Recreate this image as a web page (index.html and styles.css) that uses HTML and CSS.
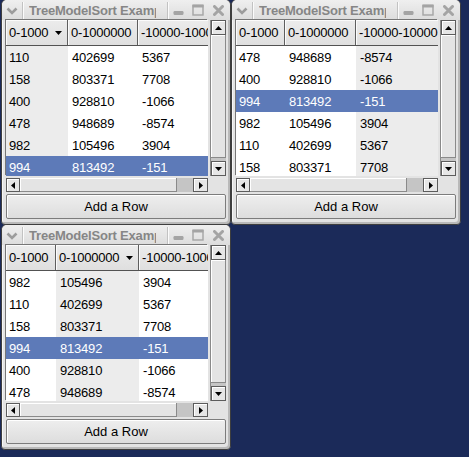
FILE: index.html
```html
<!DOCTYPE html>
<html>
<head>
<meta charset="utf-8">
<link rel="stylesheet" href="styles.css">
</head>
<body>

<div class="win w1">
  <div class="titlebar">
    <span class="menu"><svg width="12" height="8" viewBox="0 0 12 8"><polyline points="1.5,1.5 6,6 10.5,1.5" fill="none" stroke="#9c9c9c" stroke-width="2.6"/></svg></span>
    <span class="tsep"></span>
    <span class="title"><span class="ttext">TreeModelSort Example</span></span>
    <span class="tsep"></span>
    <span class="tbtn"><svg width="11" height="12" viewBox="0 0 11 12"><rect x="0.5" y="7" width="10" height="4" rx="1.2" fill="#a4a4a4"/></svg></span>
    <span class="tbtn"><svg width="12" height="12" viewBox="0 0 12 12"><rect x="1" y="1.5" width="10" height="9.5" fill="none" stroke="#a4a4a4" stroke-width="1.4"/><rect x="0.5" y="0.5" width="11" height="3" fill="#a4a4a4"/></svg></span>
    <span class="tbtn"><svg width="11" height="11" viewBox="0 0 11 11"><path d="M1.5 1.5 L9.5 9.5 M9.5 1.5 L1.5 9.5" stroke="#a4a4a4" stroke-width="3" stroke-linecap="round"/></svg></span>
  </div>
  <div class="body">
    <div class="scrolled">
      <div class="tree">
        <div class="hdr">
          <div class="hc"><span>0-1000</span><svg class="sort" width="7" height="4" viewBox="0 0 7 4"><polygon points="0,0 7,0 3.5,4" fill="#000"/></svg></div>
          <div class="hc"><span>0-1000000</span></div>
          <div class="hc"><span>-10000-10000</span></div>
        </div>
        <div class="row"><div class="cell s">110</div><div class="cell">402699</div><div class="cell">5367</div></div>
        <div class="row"><div class="cell s">158</div><div class="cell">803371</div><div class="cell">7708</div></div>
        <div class="row"><div class="cell s">400</div><div class="cell">928810</div><div class="cell">-1066</div></div>
        <div class="row"><div class="cell s">478</div><div class="cell">948689</div><div class="cell">-8574</div></div>
        <div class="row"><div class="cell s">982</div><div class="cell">105496</div><div class="cell">3904</div></div>
        <div class="row sel"><div class="cell s">994</div><div class="cell">813492</div><div class="cell">-151</div></div>
      </div>
      <div class="vscroll">
        <div class="step"><svg width="7" height="4" viewBox="0 0 7 4"><polygon points="0,4 7,4 3.5,0" fill="#000"/></svg></div>
        <div class="vslider"></div>
        <div class="step"><svg width="7" height="4" viewBox="0 0 7 4"><polygon points="0,0 7,0 3.5,4" fill="#000"/></svg></div>
      </div>
      <div class="hscroll">
        <div class="hstep"><svg width="4" height="7" viewBox="0 0 4 7"><polygon points="4,0 4,7 0,3.5" fill="#000"/></svg></div>
        <div class="hslider"></div>
        <div class="htrough"></div>
        <div class="hstep"><svg width="4" height="7" viewBox="0 0 4 7"><polygon points="0,0 0,7 4,3.5" fill="#000"/></svg></div>
      </div>
    </div>
    <button class="add">Add a Row</button>
  </div>
</div>

<div class="win w2">
  <div class="titlebar">
    <span class="menu"><svg width="12" height="8" viewBox="0 0 12 8"><polyline points="1.5,1.5 6,6 10.5,1.5" fill="none" stroke="#9c9c9c" stroke-width="2.6"/></svg></span>
    <span class="tsep"></span>
    <span class="title"><span class="ttext">TreeModelSort Example</span></span>
    <span class="tsep"></span>
    <span class="tbtn"><svg width="11" height="12" viewBox="0 0 11 12"><rect x="0.5" y="7" width="10" height="4" rx="1.2" fill="#a4a4a4"/></svg></span>
    <span class="tbtn"><svg width="12" height="12" viewBox="0 0 12 12"><rect x="1" y="1.5" width="10" height="9.5" fill="none" stroke="#a4a4a4" stroke-width="1.4"/><rect x="0.5" y="0.5" width="11" height="3" fill="#a4a4a4"/></svg></span>
    <span class="tbtn"><svg width="11" height="11" viewBox="0 0 11 11"><path d="M1.5 1.5 L9.5 9.5 M9.5 1.5 L1.5 9.5" stroke="#a4a4a4" stroke-width="3" stroke-linecap="round"/></svg></span>
  </div>
  <div class="body">
    <div class="scrolled">
      <div class="tree">
        <div class="hdr">
          <div class="hc"><span>0-1000</span></div>
          <div class="hc"><span>0-1000000</span></div>
          <div class="hc"><span>-10000-10000</span></div>
        </div>
        <div class="row"><div class="cell">478</div><div class="cell">948689</div><div class="cell s">-8574</div></div>
        <div class="row"><div class="cell">400</div><div class="cell">928810</div><div class="cell s">-1066</div></div>
        <div class="row sel"><div class="cell">994</div><div class="cell">813492</div><div class="cell s">-151</div></div>
        <div class="row"><div class="cell">982</div><div class="cell">105496</div><div class="cell s">3904</div></div>
        <div class="row"><div class="cell">110</div><div class="cell">402699</div><div class="cell s">5367</div></div>
        <div class="row"><div class="cell">158</div><div class="cell">803371</div><div class="cell s">7708</div></div>
      </div>
      <div class="vscroll">
        <div class="step"><svg width="7" height="4" viewBox="0 0 7 4"><polygon points="0,4 7,4 3.5,0" fill="#000"/></svg></div>
        <div class="vslider"></div>
        <div class="step"><svg width="7" height="4" viewBox="0 0 7 4"><polygon points="0,0 7,0 3.5,4" fill="#000"/></svg></div>
      </div>
      <div class="hscroll">
        <div class="hstep"><svg width="4" height="7" viewBox="0 0 4 7"><polygon points="4,0 4,7 0,3.5" fill="#000"/></svg></div>
        <div class="hslider"></div>
        <div class="htrough"></div>
        <div class="hstep"><svg width="4" height="7" viewBox="0 0 4 7"><polygon points="0,0 0,7 4,3.5" fill="#000"/></svg></div>
      </div>
    </div>
    <button class="add">Add a Row</button>
  </div>
</div>

<div class="win w3">
  <div class="titlebar">
    <span class="menu"><svg width="12" height="8" viewBox="0 0 12 8"><polyline points="1.5,1.5 6,6 10.5,1.5" fill="none" stroke="#9c9c9c" stroke-width="2.6"/></svg></span>
    <span class="tsep"></span>
    <span class="title"><span class="ttext">TreeModelSort Example</span></span>
    <span class="tsep"></span>
    <span class="tbtn"><svg width="11" height="12" viewBox="0 0 11 12"><rect x="0.5" y="7" width="10" height="4" rx="1.2" fill="#a4a4a4"/></svg></span>
    <span class="tbtn"><svg width="12" height="12" viewBox="0 0 12 12"><rect x="1" y="1.5" width="10" height="9.5" fill="none" stroke="#a4a4a4" stroke-width="1.4"/><rect x="0.5" y="0.5" width="11" height="3" fill="#a4a4a4"/></svg></span>
    <span class="tbtn"><svg width="11" height="11" viewBox="0 0 11 11"><path d="M1.5 1.5 L9.5 9.5 M9.5 1.5 L1.5 9.5" stroke="#a4a4a4" stroke-width="3" stroke-linecap="round"/></svg></span>
  </div>
  <div class="body">
    <div class="scrolled">
      <div class="tree">
        <div class="hdr">
          <div class="hc"><span>0-1000</span></div>
          <div class="hc"><span>0-1000000</span><svg class="sort" width="7" height="4" viewBox="0 0 7 4"><polygon points="0,0 7,0 3.5,4" fill="#000"/></svg></div>
          <div class="hc"><span>-10000-10000</span></div>
        </div>
        <div class="row"><div class="cell">982</div><div class="cell s">105496</div><div class="cell">3904</div></div>
        <div class="row"><div class="cell">110</div><div class="cell s">402699</div><div class="cell">5367</div></div>
        <div class="row"><div class="cell">158</div><div class="cell s">803371</div><div class="cell">7708</div></div>
        <div class="row sel"><div class="cell">994</div><div class="cell s">813492</div><div class="cell">-151</div></div>
        <div class="row"><div class="cell">400</div><div class="cell s">928810</div><div class="cell">-1066</div></div>
        <div class="row"><div class="cell">478</div><div class="cell s">948689</div><div class="cell">-8574</div></div>
      </div>
      <div class="vscroll">
        <div class="step"><svg width="7" height="4" viewBox="0 0 7 4"><polygon points="0,4 7,4 3.5,0" fill="#000"/></svg></div>
        <div class="vslider"></div>
        <div class="step"><svg width="7" height="4" viewBox="0 0 7 4"><polygon points="0,0 7,0 3.5,4" fill="#000"/></svg></div>
      </div>
      <div class="hscroll">
        <div class="hstep"><svg width="4" height="7" viewBox="0 0 4 7"><polygon points="4,0 4,7 0,3.5" fill="#000"/></svg></div>
        <div class="hslider"></div>
        <div class="htrough"></div>
        <div class="hstep"><svg width="4" height="7" viewBox="0 0 4 7"><polygon points="0,0 0,7 4,3.5" fill="#000"/></svg></div>
      </div>
    </div>
    <button class="add">Add a Row</button>
  </div>
</div>

</body>
</html>
```

FILE: styles.css
```css
* { box-sizing: border-box; margin: 0; padding: 0; }
html, body { width: 469px; height: 457px; overflow: hidden; }
body {
  position: relative;
  background: #1b2a59;
  font-family: "Liberation Sans", Arial, sans-serif;
  font-size: 13px;
  color: #000;
}

.win {
  position: absolute;
  width: 230px;
  height: 226px;
  display: flex;
  flex-direction: column;
  background: #e3e3e3;
  border: 1px solid #3e3e3e;
  border-radius: 6px 6px 4px 4px;
  box-shadow: inset 1px 1px 0 #f6f6f6, inset -2px -2px 0 #b9b9b9;
}
.w1 { left: 1px; top: -1px; }
.w2 { left: 231px; top: -1px; }
.w3 { left: 1px; top: 224px; }

.titlebar {
  flex: none;
  height: 20px;
  display: flex;
  background: linear-gradient(#efefef, #dcdcdc);
  border-radius: 5px 5px 0 0;
}
.menu, .tbtn {
  flex: none;
  width: 20px;
  display: flex;
  align-items: center;
  justify-content: center;
}
.menu svg { margin-top: 1px; }
.tsep {
  flex: none;
  width: 1px;
  margin: 2px 0 1px;
  background: #c2c2c2;
  box-shadow: 1px 0 0 #fbfbfb;
}
.title { flex: none; width: 144px; padding-left: 6px; }
.ttext {
  display: block;
  width: 127px;
  overflow: hidden;
  white-space: nowrap;
  font-weight: bold;
  letter-spacing: -0.2px;
  color: #868686;
  padding-top: 2px;
  line-height: 18px;
}

.body {
  flex: 1;
  display: flex;
  flex-direction: column;
  gap: 2px;
  padding: 0 4px 5px 4px;
}
.scrolled {
  display: grid;
  grid-template-columns: 202px 16px;
  grid-template-rows: 156px 14px;
  gap: 2px;
}

.tree {
  background: #fff;
  overflow: hidden;
  letter-spacing: -0.2px;
  box-shadow: -1px -1px 0 #767676;
}
.hdr, .row { display: grid; }
.w1 .hdr, .w1 .row { grid-template-columns: 62px 70px 70px; }
.w2 .hdr, .w2 .row { grid-template-columns: 49px 71px 82px; }
.w3 .hdr, .w3 .row { grid-template-columns: 50px 83px 69px; }

.hdr {
  height: 26px;
  background: linear-gradient(#ececec, #dfdfdf);
  border-bottom: 1px solid #525252;
}
.hc {
  display: flex;
  align-items: center;
  justify-content: space-between;
  padding: 0 5px 0 3px;
  line-height: 25px;
  white-space: nowrap;
  overflow: hidden;
  border-right: 1px solid #5e5e5e;
  box-shadow: inset 1px 1px 0 #fbfbfb;
}
.hc:last-child { border-right: none; }
.sort { flex: none; margin-left: 4px; }

.row { height: 22px; }
.cell {
  padding: 2px 0 0 4px;
  line-height: 20px;
  white-space: nowrap;
  overflow: hidden;
}
.cell:first-child { padding-left: 3px; }
.cell.s { background: #ececec; }
.row.sel .cell { background: #5d7ab8; color: #fff; }

.vscroll {
  display: flex;
  flex-direction: column;
  background: #c5c5c5;
  border-left: 1px solid #8a8a8a;
}
.step, .hstep {
  flex: none;
  display: flex;
  align-items: center;
  justify-content: center;
  background: #e6e6e6;
  border: 1px solid #5c5c5c;
  box-shadow: inset 1px 1px 0 #fff;
}
.step { height: 15px; }
.vslider {
  flex: 1;
  margin-bottom: 3px;
  background: #e4e4e4;
  border-right: 1px solid #8a8a8a;
  border-bottom: 1px solid #8a8a8a;
  box-shadow: inset 1px 1px 0 #fff;
}

.hscroll {
  display: flex;
  background: #c5c5c5;
}
.hstep { width: 14px; }
.hstep:last-child { width: 15px; }
.hslider {
  flex: none;
  width: 157px;
  background: #e4e4e4;
  border-right: 1px solid #8a8a8a;
  border-bottom: 1px solid #8a8a8a;
  box-shadow: inset 1px 1px 0 #fff;
}
.htrough { flex: 1; }

.add {
  flex: none;
  height: 25px;
  width: 100%;
  font: inherit;
  color: #000;
  background: linear-gradient(#eeeeee, #dddddd);
  border: 1px solid #7c7c7c;
  border-radius: 2px;
  box-shadow: inset 1px 1px 0 #fff;
}
```
